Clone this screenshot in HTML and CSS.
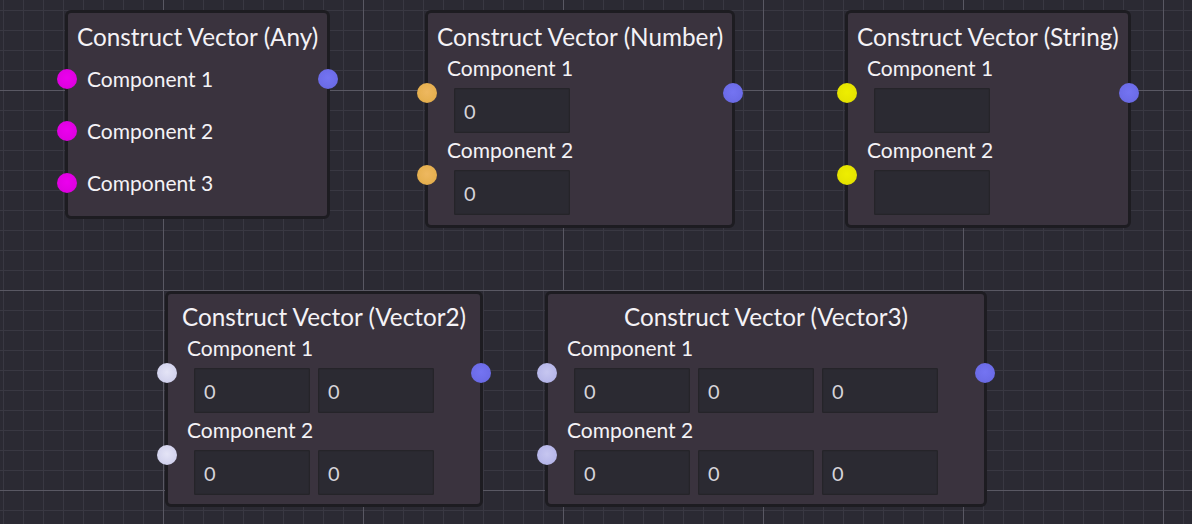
FILE: index.html
```html
<!DOCTYPE html>
<html lang="en">
<head>
<meta charset="utf-8">
<title>Construct Vector nodes</title>
<link rel="stylesheet" href="styles.css">
</head>
<body>
<div class="canvas">

  <div class="node node-any">
    <div class="title">Construct Vector (Any)</div>
    <div class="rows-simple">
      <div class="row-simple"><span class="socket in any"></span><span class="label">Component 1</span><span class="socket out"></span></div>
      <div class="row-simple"><span class="socket in any"></span><span class="label">Component 2</span></div>
      <div class="row-simple"><span class="socket in any"></span><span class="label">Component 3</span></div>
    </div>
  </div>

  <div class="node node-number">
    <div class="title">Construct Vector (Number)</div>
    <div class="row">
      <span class="socket in number"></span><span class="socket out"></span>
      <div class="label">Component 1</div>
      <div class="fields"><div class="field">0</div></div>
    </div>
    <div class="row">
      <span class="socket in number"></span>
      <div class="label">Component 2</div>
      <div class="fields"><div class="field">0</div></div>
    </div>
  </div>

  <div class="node node-string">
    <div class="title">Construct Vector (String)</div>
    <div class="row">
      <span class="socket in string"></span><span class="socket out"></span>
      <div class="label">Component 1</div>
      <div class="fields"><div class="field"></div></div>
    </div>
    <div class="row">
      <span class="socket in string"></span>
      <div class="label">Component 2</div>
      <div class="fields"><div class="field"></div></div>
    </div>
  </div>

  <div class="node node-vec2">
    <div class="title">Construct Vector (Vector2)</div>
    <div class="row">
      <span class="socket in vec2"></span><span class="socket out"></span>
      <div class="label">Component 1</div>
      <div class="fields"><div class="field">0</div><div class="field">0</div></div>
    </div>
    <div class="row">
      <span class="socket in vec2"></span>
      <div class="label">Component 2</div>
      <div class="fields"><div class="field">0</div><div class="field">0</div></div>
    </div>
  </div>

  <div class="node node-vec3">
    <div class="title">Construct Vector (Vector3)</div>
    <div class="row">
      <span class="socket in vec3"></span><span class="socket out"></span>
      <div class="label">Component 1</div>
      <div class="fields"><div class="field">0</div><div class="field">0</div><div class="field">0</div></div>
    </div>
    <div class="row">
      <span class="socket in vec3"></span>
      <div class="label">Component 2</div>
      <div class="fields"><div class="field">0</div><div class="field">0</div><div class="field">0</div></div>
    </div>
  </div>

</div>
</body>
</html>
```
FILE: styles.css
```css
* { box-sizing: border-box; }

html, body {
  margin: 0;
  padding: 0;
}

body {
  font-family: Lato, "Noto Sans", sans-serif;
  color: #f4f2f6;
  background: #2b2a33;
}

.canvas {
  position: relative;
  width: 1192px;
  height: 524px;
  overflow: hidden;
  background-color: #2b2a33;
  background-image:
    linear-gradient(to right, #595863 1px, transparent 1px),
    linear-gradient(to bottom, #595863 1px, transparent 1px),
    linear-gradient(to right, #393842 1px, transparent 1px),
    linear-gradient(to bottom, #393842 1px, transparent 1px);
  background-size: 200px 200px, 200px 200px, 20px 20px, 20px 20px;
  background-position: 163px 0, 0 90px, 3px 0, 0 10px;
}

.node {
  position: absolute;
  background: #3a333e;
  border: 3px solid #1d1c21;
  border-radius: 6px;
  padding: 10px 9px 10px 9px;
}

.node-any    { left: 65px;  top: 10px; padding-bottom: 7px; }
.node-number { left: 425px; top: 10px; }
.node-string { left: 845px; top: 10px; }
.node-vec2   { left: 165px; top: 291px; padding-top: 9px; padding-bottom: 9px; }
.node-vec3   { left: 545px; top: 291px; padding-top: 9px; padding-bottom: 9px; }

.title {
  font-size: 24.3px;
  line-height: 28px;
  text-align: center;
  white-space: nowrap;
}

.label {
  font-size: 21px;
  line-height: 24px;
  white-space: nowrap;
}

/* simple rows (no value fields) */
.rows-simple {
  margin-top: 2px;
}

.row-simple {
  position: relative;
  height: 52px;
  display: flex;
  align-items: center;
  padding-left: 10px;
}

.row-simple .socket { top: 16px; }

/* rows with value fields */
.row {
  position: relative;
  margin-top: 5px;
  padding: 0 37px 0 10px;
}

.row .socket { top: 27px; }

.fields {
  display: flex;
  gap: 8px;
  margin-top: 8px;
  padding-left: 7px;
}

.field {
  width: 116px;
  height: 45px;
  background: #2b2a32;
  border-radius: 2px;
  box-shadow: inset 0 0 0 1px #252429, inset 0 0 0 2px #29282f;
  color: #d6d4da;
  font-size: 20px;
  line-height: 45px;
  padding-left: 10px;
  padding-top: 1px;
}

/* sockets */
.socket {
  position: absolute;
  width: 20px;
  height: 20px;
  border-radius: 50%;
}

.socket.in  { left: -20px; }
.socket.out { right: -20px; background: radial-gradient(circle at 50% 45%, #7474f2 0%, #6c6ce8 60%, #6363d8 100%); }

.socket.any    { background: radial-gradient(circle at 50% 45%, #ec00ee 0%, #e000e2 60%, #cf00d2 100%); }
.socket.number { background: radial-gradient(circle at 50% 45%, #eeb860 0%, #e6b050 60%, #d8a244 100%); }
.socket.string { background: radial-gradient(circle at 50% 45%, #eeee00 0%, #e6e400 60%, #d6d400 100%); }
.socket.vec2   { background: radial-gradient(circle at 50% 45%, #e4e4f6 0%, #d4d4ee 60%, #c2c2e2 100%); }
.socket.vec3   { background: radial-gradient(circle at 50% 45%, #c6c6f0 0%, #b8b8ea 60%, #a8a8dc 100%); }
```
